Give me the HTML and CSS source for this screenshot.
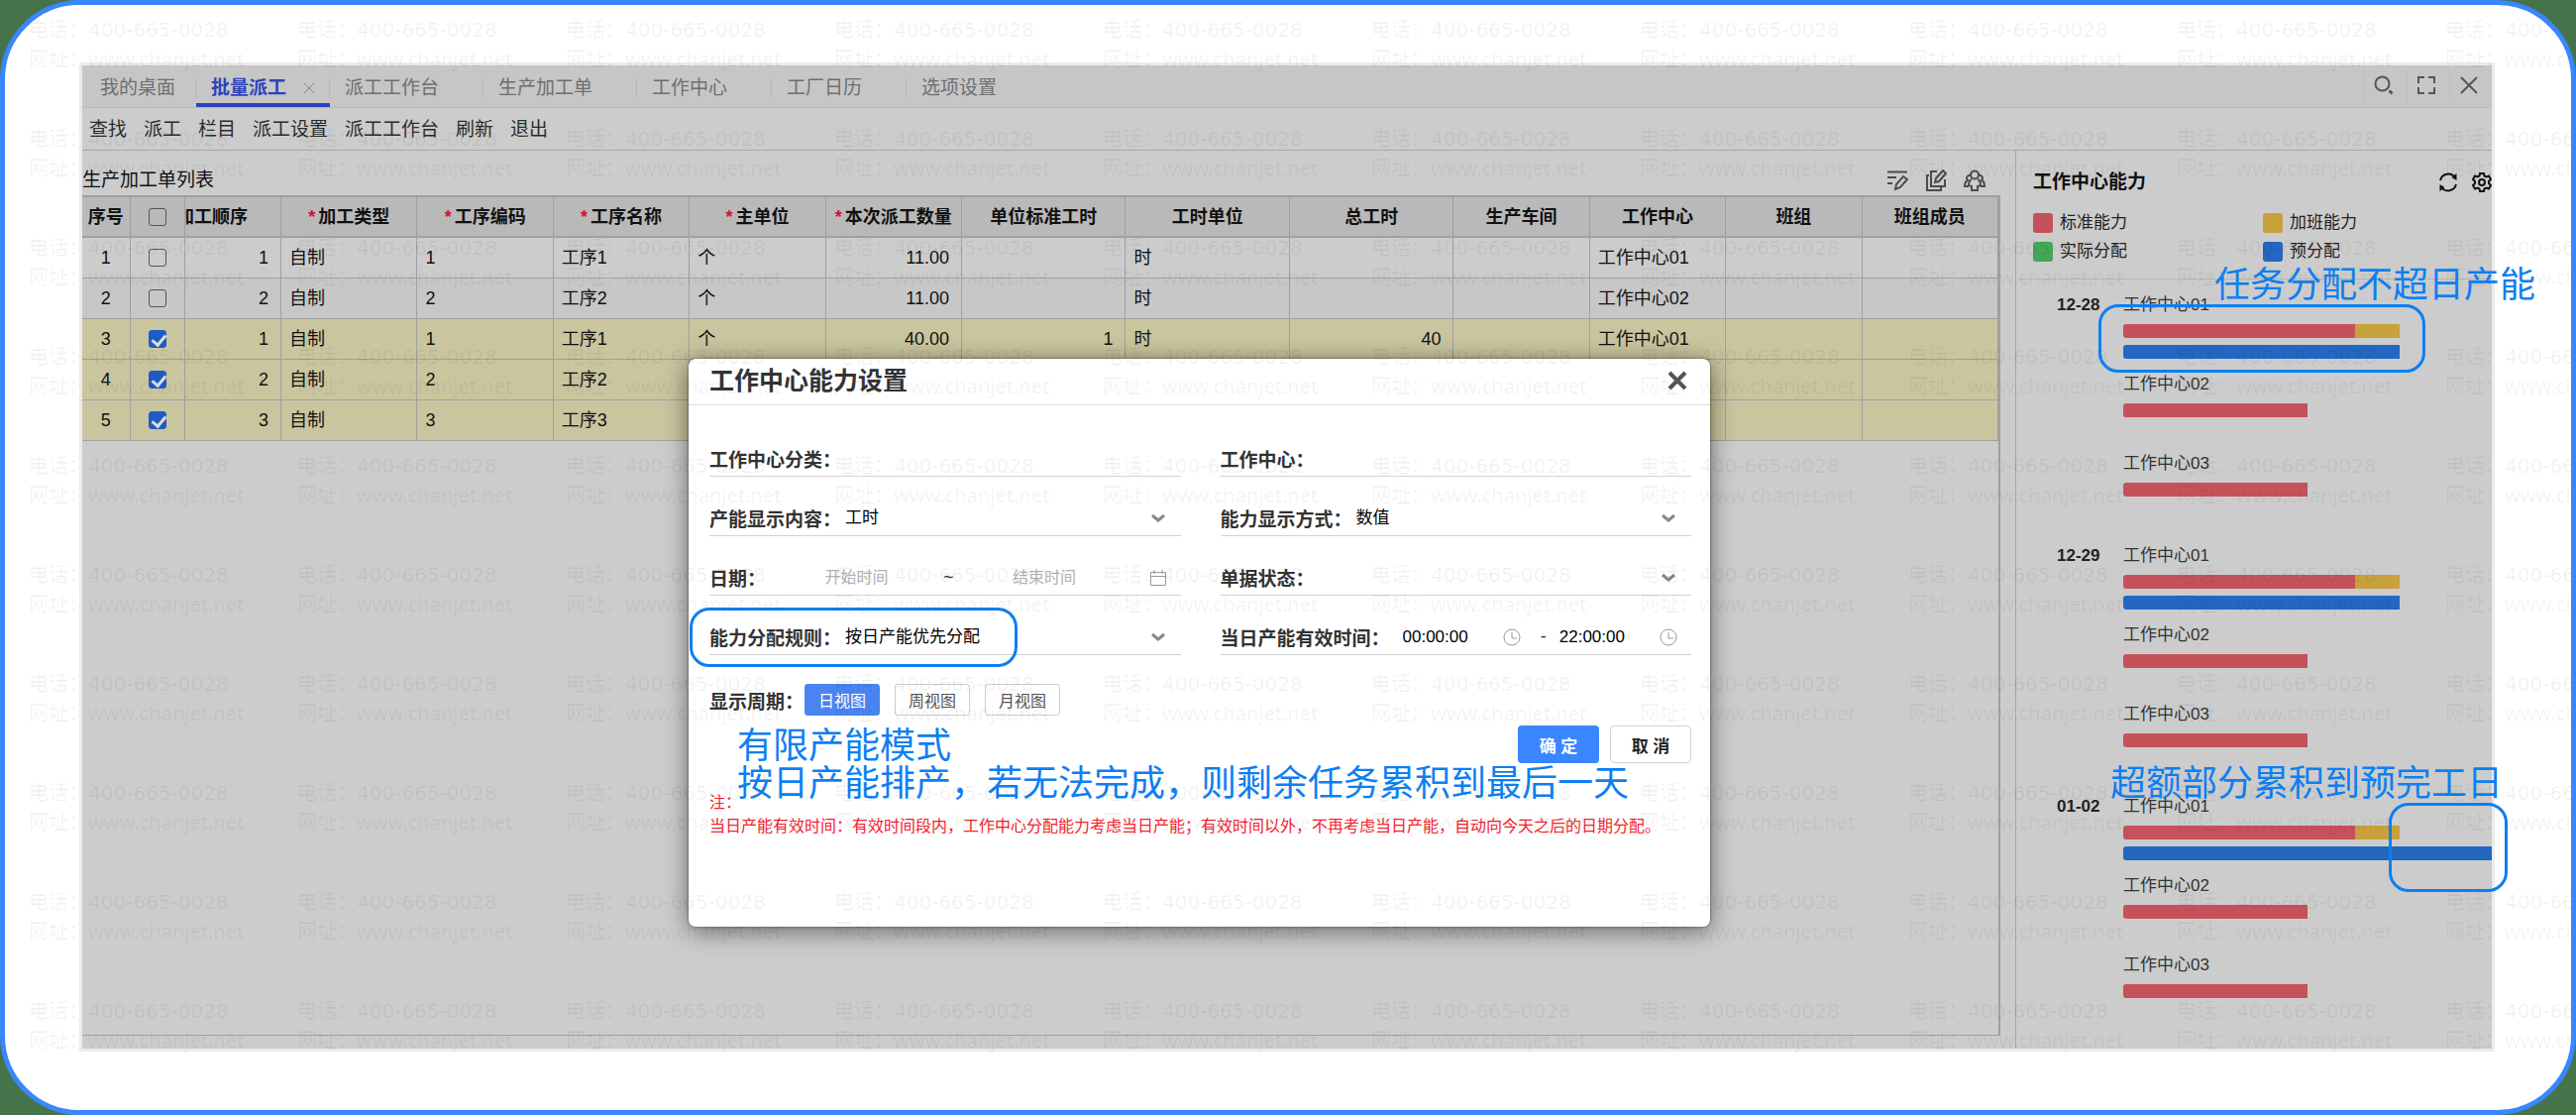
FILE: index.html
```html
<!DOCTYPE html>
<html lang="zh-CN">
<head>
  <meta charset="UTF-8" />
  <meta name="viewport" content="width=device-width, initial-scale=1.0" />
  <title>批量派工</title>
  <link rel="stylesheet" href="styles.css">
</head>
<body>
  <div class="frame">
    <div class="app">
      <nav class="tabs">
        <a class="tab first" href="#">我的桌面</a>
        <a class="tab active" href="#">批量派工<svg class="tab-close" viewBox="0 0 12 12"><path d="M1 1l10 10M11 1L1 11"/></svg></a>
        <a class="tab" href="#">派工工作台</a>
        <a class="tab" href="#">生产加工单</a>
        <a class="tab" href="#">工作中心</a>
        <a class="tab" href="#">工厂日历</a>
        <a class="tab" href="#">选项设置</a>
        <div class="window-tools">
          <button aria-label="搜索"><svg viewBox="0 0 20 20"><circle cx="8.5" cy="8.5" r="7"/><path d="M15.5 15.5l3 3" stroke-width="3"/></svg></button>
          <button aria-label="全屏"><svg viewBox="0 0 20 20"><path d="M2 8V2h6M12 2h6v6M18 12v6h-6M8 18H2v-6"/></svg></button>
          <button aria-label="关闭"><svg viewBox="0 0 20 20"><path d="M2 2l16 16M18 2L2 18"/></svg></button>
        </div>
      </nav>

      <div class="toolbar">
        <button>查找</button>
        <button>派工</button>
        <button>栏目</button>
        <button>派工设置</button>
        <button>派工工作台</button>
        <button>刷新</button>
        <button>退出</button>
      </div>

      <div class="main">
        <section class="orders">
          <div class="orders-head">
            <h2>生产加工单列表</h2>
            <div class="orders-tools">
              <button aria-label="批改"><svg viewBox="0 0 22 22"><path d="M1 2.500h20M1 8h9M1 14h5"/><path d="M9 20l1-5 7-8 4 3-7 8z"/></svg></button>
              <button aria-label="编辑"><svg viewBox="0 0 22 22"><path d="M4 6H2v15h14v-3M12 2H6v15h14v-7"/><path d="M10 13l1-4 7-8 3 3-7 8z"/></svg></button>
              <button aria-label="班组"><svg viewBox="0 0 22 22"><circle cx="11" cy="5.500" r="4"/><path d="M7 6a3 3 0 0 0-3 5c-3 1-3 4-3 6h4M15 6a3 3 0 0 1 3 5c3 1 3 4 3 6h-4M8 10c-3 1-3 4-3 6l3 1v4h6v-4l3-1c0-2 0-5-3-6"/></svg></button>
            </div>
          </div>
          <div class="table-wrap">
            <table class="orders-table">
              <colgroup>
                <col class="w-no"><col class="w-check"><col class="w-seq">
                <col class="w-m"><col class="w-m"><col class="w-m"><col class="w-m"><col class="w-m">
                <col class="w-l"><col class="w-l"><col class="w-l">
                <col class="w-m"><col class="w-m"><col class="w-m"><col class="w-m">
              </colgroup>
              <thead>
                <tr>
                  <th>序号</th>
                  <th><input type="checkbox" aria-label="全选"></th>
                  <th><div class="clipped"><span class="req">加工顺序</span></div></th>
                  <th><span class="req">加工类型</span></th>
                  <th><span class="req">工序编码</span></th>
                  <th><span class="req">工序名称</span></th>
                  <th><span class="req">主单位</span></th>
                  <th><span class="req">本次派工数量</span></th>
                  <th>单位标准工时</th>
                  <th>工时单位</th>
                  <th>总工时</th>
                  <th>生产车间</th>
                  <th>工作中心</th>
                  <th>班组</th>
                  <th>班组成员</th>
                </tr>
              </thead>
              <tbody>
                <tr>
                  <td class="mid">1</td><td class="mid"><input type="checkbox" aria-label="第1行"></td><td class="num">1</td><td>自制</td><td>1</td><td>工序1</td><td>个</td><td class="num">11.00</td><td></td><td>时</td><td></td><td></td><td>工作中心01</td><td></td><td></td>
                </tr>
                <tr class="even">
                  <td class="mid">2</td><td class="mid"><input type="checkbox" aria-label="第2行"></td><td class="num">2</td><td>自制</td><td>2</td><td>工序2</td><td>个</td><td class="num">11.00</td><td></td><td>时</td><td></td><td></td><td>工作中心02</td><td></td><td></td>
                </tr>
                <tr class="picked">
                  <td class="mid">3</td><td class="mid"><input type="checkbox" aria-label="第3行" checked></td><td class="num">1</td><td>自制</td><td>1</td><td>工序1</td><td>个</td><td class="num">40.00</td><td class="num">1</td><td>时</td><td class="num">40</td><td></td><td>工作中心01</td><td></td><td></td>
                </tr>
                <tr class="picked">
                  <td class="mid">4</td><td class="mid"><input type="checkbox" aria-label="第4行" checked></td><td class="num">2</td><td>自制</td><td>2</td><td>工序2</td><td></td><td></td><td></td><td></td><td></td><td></td><td></td><td></td><td></td>
                </tr>
                <tr class="picked">
                  <td class="mid">5</td><td class="mid"><input type="checkbox" aria-label="第5行" checked></td><td class="num">3</td><td>自制</td><td>3</td><td>工序3</td><td></td><td></td><td></td><td></td><td></td><td></td><td></td><td></td><td></td>
                </tr>
              </tbody>
            </table>
          </div>
        </section>

        <aside class="capacity">
          <div class="capacity-head">
            <h2>工作中心能力</h2>
            <button aria-label="刷新"><svg viewBox="0 0 20 20"><path d="M2 8a8.500 8.500 0 0 1 15-3M18 12a8.500 8.500 0 0 1-15 3"/><path d="M18.500 1v7l-5-3zM1.500 19v-7l5 3z" fill="currentColor" stroke="none"/></svg></button>
            <button aria-label="设置"><svg viewBox="0 0 20 20"><circle cx="10" cy="10" r="3"/><path d="M8 1h4l.5 2.500 2 1 2.500-1 2 3.500-2 2v2l2 2-2 3.500-2.500-1-2 1L12 19H8l-.5-2.500-2-1-2.500 1L1 13l2-2V9L1 7l2-3.500 2.500 1 2-1z"/></svg></button>
          </div>
          <ul class="legend">
            <li><span class="swatch standard"></span>标准能力</li>
            <li><span class="swatch overtime"></span>加班能力</li>
            <li><span class="swatch actual"></span>实际分配</li>
            <li><span class="swatch planned"></span>预分配</li>
          </ul>
          <div class="days" id="days"></div>
        </aside>
      </div>

      <div class="modal" role="dialog" aria-labelledby="modalTitle">
        <div class="modal-head">
          <h1 id="modalTitle">工作中心能力设置</h1>
          <button class="modal-close" aria-label="关闭"><svg viewBox="0 0 20 20"><path d="M2 2l16 16M18 2L2 18"/></svg></button>
        </div>
        <form class="modal-body">
          <div class="fields">
            <div class="field">
              <label for="category">工作中心分类：</label>
              <input id="category" type="text">
            </div>
            <div class="field">
              <label for="center">工作中心：</label>
              <input id="center" type="text">
            </div>
            <div class="field">
              <label for="content">产能显示内容：</label>
              <select id="content"><option>工时</option></select>
              <svg class="arrow" viewBox="0 0 14 10"><path d="M1 2l6 5 6-5"/></svg>
            </div>
            <div class="field">
              <label for="mode">能力显示方式：</label>
              <select id="mode"><option>数值</option></select>
              <svg class="arrow" viewBox="0 0 14 10"><path d="M1 2l6 5 6-5"/></svg>
            </div>
            <div class="field range">
              <label for="dateFrom">日期：</label>
              <input id="dateFrom" type="text" placeholder="开始时间">
              <span>~</span>
              <input type="text" placeholder="结束时间" aria-label="结束时间">
              <svg class="pick" viewBox="0 0 18 18"><path d="M1.500 3.500h15v13h-15zM1.500 7.500h15M5 1v4M13 1v4"/></svg>
            </div>
            <div class="field">
              <label for="status">单据状态：</label>
              <select id="status"><option></option></select>
              <svg class="arrow" viewBox="0 0 14 10"><path d="M1 2l6 5 6-5"/></svg>
            </div>
            <div class="field">
              <label for="rule">能力分配规则：</label>
              <select id="rule"><option>按日产能优先分配</option></select>
              <svg class="arrow" viewBox="0 0 14 10"><path d="M1 2l6 5 6-5"/></svg>
            </div>
            <div class="field times">
              <label for="timeFrom">当日产能有效时间：</label>
              <input id="timeFrom" type="text" value="00:00:00">
              <svg class="pick" viewBox="0 0 18 18"><circle cx="9" cy="9" r="8"/><path d="M9 4v6h5"/></svg>
              <span>-</span>
              <input type="text" value="22:00:00" aria-label="结束时间">
              <svg class="pick" viewBox="0 0 18 18"><circle cx="9" cy="9" r="8"/><path d="M9 4v6h5"/></svg>
            </div>
          </div>
          <div class="period">
            <span class="period-label">显示周期：</span>
            <button type="button" class="view on">日视图</button>
            <button type="button" class="view">周视图</button>
            <button type="button" class="view">月视图</button>
          </div>
          <div class="actions">
            <button type="button" class="ok">确 定</button>
            <button type="button" class="cancel">取 消</button>
          </div>
          <p class="tip">注：<br>当日产能有效时间：有效时间段内，工作中心分配能力考虑当日产能；有效时间以外，不再考虑当日产能，自动向今天之后的日期分配。</p>
        </form>
      </div>

      <!-- 说明标注 -->
      <div class="mark mark-rule"></div>
      <div class="mark mark-day"></div>
      <div class="mark mark-over"></div>
      <p class="note note-mode">有限产能模式<br>按日产能排产，若无法完成，则剩余任务累积到最后一天</p>
      <p class="note note-day">任务分配不超日产能</p>
      <p class="note note-over">超额部分累积到预完工日</p>
    </div>
    <div class="watermark" id="watermark" aria-hidden="true"></div>
  </div>

  <script>
    // 每个工作中心的能力条，数值为占轨道宽度的百分比
    const days = [
      { date: "12-28", planned: 75 },
      { date: "12-29", planned: 75 },
      { date: "01-02", planned: 100 }
    ];

    function bar(parts) {
      const segs = parts.map(([type, w]) => `<span class="${type}" style="width:${w}%"></span>`);
      return `<div class="bar">${segs.join("")}</div>`;
    }

    document.getElementById("days").innerHTML = days.map(day => `
      <div class="day">
        <div class="date">${day.date}</div>
        <div class="centers">
          <div class="center">工作中心01
            ${bar([["standard", 63], ["overtime", 12]])}
            ${bar([["planned", day.planned]])}
          </div>
          <div class="center">工作中心02 ${bar([["standard", 50]])}</div>
          <div class="center">工作中心03 ${bar([["standard", 50]])}</div>
        </div>
      </div>`).join("");

    const watermark = document.getElementById("watermark");
    for (let i = 0; i < 100; i++) {
      const item = document.createElement("div");
      item.innerHTML = "电话：<b>400-665-0028</b><br>网址：www.chanjet.net";
      watermark.appendChild(item);
    }
  </script>
</body>
</html>
```
FILE: styles.css
```css
* {
  box-sizing: border-box;
}
body {
  margin: 0;
  background: #45734a;
  font-family: "Liberation Sans", "Noto Sans CJK SC", sans-serif;
  font-size: 18px;
  color: #111;
}
h1, h2, p, ul {
  margin: 0;
  padding: 0;
}
button, input, select {
  font: inherit;
  color: inherit;
  margin: 0;
  padding: 0;
  border: 0;
  background: none;
}
button {
  cursor: pointer;
}
svg {
  display: block;
  fill: none;
  stroke: currentColor;
  stroke-width: 2;
}
.frame {
  position: relative;
  display: flex;
  min-height: 100vh;
  padding: 61px 80px 62px 78px;
  border: 5px solid #3a86ff;
  border-radius: 80px;
  background: #fff;
  overflow: hidden;
}
.app {
  position: relative;
  flex: 1;
  display: flex;
  flex-direction: column;
  min-width: 0;
  background: #ccc;
  box-shadow: 0 0 0 3px #ebebeb;
}

/* 页签 */
.tabs {
  display: flex;
  height: 43px;
  background: #c6c6c6;
  border-bottom: 1px solid #bababa;
}
.tab {
  position: relative;
  display: flex;
  align-items: center;
  padding: 4px 45px 0 15px;
  font-size: 19px;
  line-height: 30px;
  color: #6e6e6e;
  text-decoration: none;
}
.tab::after {
  content: "";
  position: absolute;
  right: 0;
  top: 13px;
  height: 20px;
  border-right: 1px solid #b4b4bb;
}
.tab:nth-child(7)::after {
  display: none;
}
.tab.first {
  padding: 4px 21px 0 18px;
}
.tab.active {
  padding: 8px 15px 0 15px;
  gap: 17px;
  font-weight: bold;
  color: #2c43bd;
  border-bottom: 4px solid #2c43bd;
}
.tab-close {
  width: 12px;
  height: 12px;
  color: #888;
  stroke-width: 1;
}
.window-tools {
  display: flex;
  margin-left: auto;
}
.window-tools button {
  width: 43px;
  margin: 4px 0 7px;
  padding-left: 9px;
  border-left: 1px solid #bbb;
  color: #555;
}
.window-tools svg {
  width: 20px;
  height: 20px;
}

.toolbar {
  display: flex;
  gap: 17px;
  height: 43px;
  padding: 0 0 3px 7px;
  border-bottom: 1px solid #a6a6a6;
  font-size: 19px;
  color: #2b2b2b;
}

.main {
  flex: 1;
  display: flex;
}

/* 加工单列表 */
.orders {
  flex: 1;
  display: flex;
  flex-direction: column;
  min-width: 0;
  padding: 0 15px 13px 0;
}
.orders-head {
  display: flex;
  align-items: center;
  justify-content: space-between;
  height: 45px;
  padding: 14px 15px 0 0;
}
.orders-head h2 {
  font-size: 19px;
  font-weight: normal;
  line-height: 30px;
}
.orders-tools {
  display: flex;
  gap: 17px;
  color: #4d4d4d;
}
.orders-tools svg {
  width: 22px;
  height: 22px;
}
.table-wrap {
  flex: 1;
  border: solid #a0a0a0;
  border-width: 2px 2px 1px 0;
}
.orders-table {
  width: 100%;
  table-layout: fixed;
  border-collapse: collapse;
}
.w-no { width: 48px; }
.w-check { width: 55px; }
.w-seq { width: 97px; }
.w-m { width: 137px; }
.w-l { width: 165px; }
th, td {
  height: 41px;
  padding: 0 8px;
  border: 1px solid #a0a0a0;
  line-height: 24px;
  text-align: left;
  white-space: nowrap;
}
th:first-child, td:first-child {
  border-left: 0;
  padding: 0;
}
th {
  height: 40px;
  background: #b9b9b9;
  border-top: 0;
  border-bottom-width: 2px;
  padding: 0;
  text-align: center;
}
.clipped {
  display: flex;
  justify-content: flex-end;
  padding-right: 33px;
  overflow: hidden;
}
.req::before {
  content: "*";
  margin-right: 3px;
  color: #cc1533;
}
td.mid {
  text-align: center;
}
td.num {
  padding-right: 12px;
  text-align: right;
}
.even td {
  background: #c7c7c7;
}
.picked td {
  background: #c9c59f;
}
input[type="checkbox"] {
  position: relative;
  appearance: none;
  display: block;
  width: 18px;
  height: 18px;
  margin: 0 auto;
  border: 1px solid #555;
  border-radius: 3px;
}
input[type="checkbox"]:checked {
  border-color: #1f5bc4;
  background: #1f5bc4;
}
input[type="checkbox"]:checked::after {
  content: "";
  position: absolute;
  left: 5px;
  top: 1px;
  width: 6px;
  height: 11px;
  border: solid #ddd;
  border-width: 0 3px 3px 0;
  transform: rotate(40deg);
}

/* 工作中心能力 */
.capacity {
  width: 481px;
  border-left: 1px solid #a6a6a6;
}
.capacity-head {
  display: flex;
  align-items: center;
  gap: 14px;
  padding: 17px 0 0 17px;
}
.capacity-head h2 {
  flex: 1;
  font-size: 19px;
  line-height: 30px;
}
.capacity-head svg {
  width: 20px;
  height: 20px;
}
.legend {
  display: grid;
  grid-template-columns: 232px 1fr;
  row-gap: 4px;
  margin-left: 3px;
  padding: 13px 0 15px 14px;
  border-bottom: 1px solid #b5b5b5;
  font-size: 17px;
  line-height: 25px;
  color: #222;
  list-style: none;
}
.legend li {
  display: flex;
  align-items: center;
  gap: 7px;
}
.swatch {
  width: 20px;
  height: 20px;
  border-radius: 3px;
}
.standard { background: #c5525b; }
.overtime { background: #c8a13c; }
.actual { background: #43a754; }
.planned { background: #2367c1; }
.days {
  padding: 14px 0 0 41px;
  font-size: 17px;
  line-height: 24px;
  color: #333;
}
.day {
  display: flex;
  gap: 22px;
  padding-bottom: 13px;
}
.date {
  width: 45px;
  font-weight: bold;
  color: #222;
  white-space: nowrap;
}
.centers {
  flex: 1;
}
.center {
  height: 80px;
}
.bar {
  display: flex;
  height: 14px;
  margin-top: 7px;
  border-radius: 3px 0 0 3px;
  overflow: hidden;
}

/* 能力设置弹窗 */
.modal {
  position: absolute;
  left: 612px;
  right: 789px;
  top: 296px;
  padding-bottom: 89px;
  border-radius: 7px;
  background: #fff;
  box-shadow: 0 4px 24px rgba(0, 0, 0, .5), 0 0 3px rgba(0, 0, 0, .5);
  color: #333;
}
.modal-head {
  display: flex;
  justify-content: space-between;
  align-items: center;
  height: 47px;
  padding: 0 23px 2px 21px;
  border-bottom: 1px solid #ddd;
}
.modal-head h1 {
  font-size: 25px;
  font-weight: bold;
  line-height: 36px;
}
.modal-close {
  color: #555;
}
.modal-close svg {
  width: 20px;
  height: 20px;
  stroke-width: 4;
}
.modal-body {
  padding: 36px 19px 0 21px;
}
.fields {
  display: grid;
  grid-template-columns: 1fr 1fr;
  gap: 24px 40px;
}
.field {
  display: flex;
  align-items: center;
  min-width: 0;
  height: 36px;
  border-bottom: 1px solid #d2d2d2;
}
.field label, .period-label {
  font-size: 19px;
  font-weight: bold;
  white-space: nowrap;
}
.field input, .field select {
  flex: 1;
  min-width: 0;
  height: 30px;
  margin-left: 4px;
  appearance: none;
  outline: none;
  font-size: 17px;
  color: #000;
}
.arrow {
  width: 14px;
  height: 10px;
  margin-right: 16px;
  color: #888;
  stroke-width: 3;
}
.pick {
  width: 18px;
  height: 18px;
  color: #999;
  stroke-width: 1;
}
.field.range input {
  font-size: 16px;
  text-align: center;
}
.range input::placeholder {
  color: #b0b0b0;
}
.range .pick {
  margin: 0 14px 0 18px;
}
.times input {
  margin-left: 13px;
}
.times span {
  margin-left: 20px;
}
.times .pick:last-child {
  margin-right: 14px;
}
.period {
  display: flex;
  align-items: center;
  gap: 15px;
  margin-top: 29px;
}
.period-label {
  margin-right: -14px;
}
.view {
  width: 76px;
  height: 32px;
  border: 1px solid #ccc;
  border-radius: 3px;
  font-size: 16px;
  color: #555;
}
.view.on {
  border-color: #4a84f0;
  background: #4a84f0;
  color: #fff;
}
.actions {
  display: flex;
  justify-content: flex-end;
  gap: 11px;
  margin-top: 10px;
}
.actions button {
  width: 82px;
  height: 38px;
  border-radius: 4px;
  font-size: 17px;
  font-weight: bold;
}
.ok {
  background: #3a86ff;
  color: #fff;
}
.actions .cancel {
  border: 1px solid #d2d2d2;
  color: #222;
}
.tip {
  margin-top: 28px;
  font-size: 16px;
  line-height: 24px;
  color: #f5222d;
}

/* 标注框与标注文字 */
.mark {
  position: absolute;
  border: 3px solid #0d7ff2;
  border-radius: 20px;
}
.mark-rule {
  left: 613px;
  top: 547px;
  width: 331px;
  height: 60px;
}
.mark-day {
  right: 67px;
  top: 241px;
  width: 330px;
  height: 69px;
}
.mark-over {
  right: -16px;
  top: 744px;
  width: 120px;
  height: 90px;
}
.note {
  position: absolute;
  font-size: 36px;
  line-height: 38px;
  color: #0d7ff2;
  white-space: nowrap;
}
.note-mode {
  left: 661px;
  top: 668px;
}
.note-day {
  right: -44px;
  top: 203px;
}
.note-over {
  right: -11px;
  top: 706px;
}

.watermark {
  position: absolute;
  inset: 10px 0 auto 24px;
  display: grid;
  grid-template-columns: repeat(10, 271px);
  grid-auto-rows: 110px;
  font-family: "Noto Sans", "Noto Sans CJK SC", sans-serif;
  font-size: 20px;
  line-height: 30px;
  color: rgba(0, 0, 0, .06);
  white-space: nowrap;
  pointer-events: none;
}
.watermark b {
  font-family: "DejaVu Sans", sans-serif;
  font-weight: normal;
}
```
